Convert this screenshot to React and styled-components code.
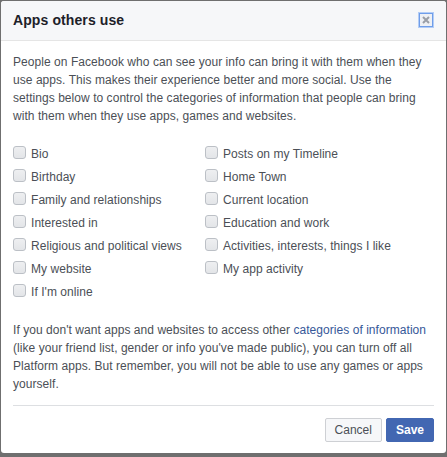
import React from "react";
import styled, { createGlobalStyle } from "styled-components";

const Global = createGlobalStyle`
  html, body { margin: 0; padding: 0; }
  body {
    background: #6f6f6f;
    font-family: "Liberation Sans", Arial, Helvetica, sans-serif;
  }
  #root { padding: 1px 1px 4px 1px; }
`;

const Dialog = styled.div`
  width: 445px;
  background: #fff;
  border-radius: 3px;
  overflow: hidden;
`;

const Header = styled.div`
  height: 39px;
  background: #f6f7f9;
  border-bottom: 1px solid #e5e5e5;
  display: flex;
  align-items: center;
  justify-content: space-between;
  padding: 0 13px 0 12px;
`;

const Title = styled.h3`
  margin: 0;
  font-size: 14px;
  font-weight: bold;
  color: #1d2129;
  line-height: 19px;
  letter-spacing: 0.1px;
`;

const Close = styled.button`
  width: 14px;
  height: 14px;
  padding: 0;
  margin-top: -1px;
  box-sizing: border-box;
  border: 1px solid #6f9de9;
  box-shadow: 0 0 0 1px #b3cdf6;
  background: #eef0f4;
  display: flex;
  align-items: center;
  justify-content: center;
  cursor: pointer;
`;

const Body = styled.div`
  padding: 12px 12px 12px 12px;
`;

const Para = styled.p`
  margin: 0;
  font-size: 12px;
  line-height: 18px;
  color: #4b4f56;
  letter-spacing: 0.05px;
`;

const List = styled.div`
  display: grid;
  grid-template-columns: 192px 1fr;
  grid-auto-rows: 23px;
  margin: 17px 0 18px;
`;

const Item = styled.label`
  display: flex;
  align-items: center;
  font-size: 12px;
  color: #4b4f56;
  letter-spacing: 0.05px;
  cursor: pointer;
`;

const Box = styled.span`
  width: 13px;
  height: 13px;
  box-sizing: border-box;
  border: 1px solid #bcc0c6;
  border-radius: 3px;
  background: linear-gradient(#eeeff1, #e3e5e8);
  margin: -2px 5px 0 0;
  flex: none;
`;

const Link = styled.a`
  color: #365899;
  text-decoration: none;
`;

const Footer = styled.div`
  margin: 0 12px;
  border-top: 1px solid #dddfe2;
  padding: 12px 0 11px;
  display: flex;
  justify-content: flex-end;
  gap: 4px;
`;

const Button = styled.button`
  height: 24px;
  box-sizing: border-box;
  border-radius: 2px;
  font-family: "Liberation Sans", Arial, Helvetica, sans-serif;
  font-size: 12px;
  line-height: 22px;
  padding: 0 ${(p) => (p.$primary ? "9px" : "9px")};
  border: 1px solid ${(p) => (p.$primary ? "#4267b2" : "#ced0d4")};
  background: ${(p) => (p.$primary ? "#4267b2" : "#f6f7f9")};
  color: ${(p) => (p.$primary ? "#fff" : "#4b4f56")};
  font-weight: ${(p) => (p.$primary ? "bold" : "normal")};
  cursor: pointer;
`;

const left = [
  "Bio",
  "Birthday",
  "Family and relationships",
  "Interested in",
  "Religious and political views",
  "My website",
  "If I'm online",
];
const right = [
  "Posts on my Timeline",
  "Home Town",
  "Current location",
  "Education and work",
  "Activities, interests, things I like",
  "My app activity",
];

const items = [];
for (let i = 0; i < left.length; i++) {
  items.push(left[i]);
  items.push(right[i] || null);
}

export default function App() {
  return (
    <>
      <Global />
      <Dialog>
        <Header>
          <Title>Apps others use</Title>
          <Close aria-label="Close">
            <svg width="8" height="8" viewBox="0 0 8 8">
              <path d="M1 1 L7 7 M7 1 L1 7" stroke="#9a9ea6" strokeWidth="2" />
            </svg>
          </Close>
        </Header>
        <Body>
          <Para>
            People on Facebook who can see your info can bring it with them when they
            use apps. This makes their experience better and more social. Use the
            settings below to control the categories of information that people can bring
            with them when they use apps, games and websites.
          </Para>
          <List>
            {items.map((t, i) =>
              t ? (
                <Item key={i}>
                  <Box />
                  {t}
                </Item>
              ) : (
                <span key={i} />
              )
            )}
          </List>
          <Para>
            If you don't want apps and websites to access other{" "}
            <Link href="#">categories of information</Link> (like your friend list,
            gender or info you've made public), you can turn off all Platform apps. But
            remember, you will not be able to use any games or apps yourself.
          </Para>
        </Body>
        <Footer>
          <Button>Cancel</Button>
          <Button $primary>Save</Button>
        </Footer>
      </Dialog>
    </>
  );
}
